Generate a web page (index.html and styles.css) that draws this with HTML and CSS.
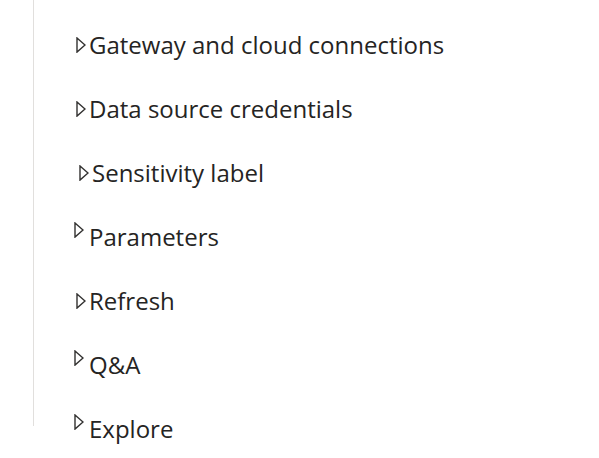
FILE: index.html
```html
<!DOCTYPE html>
<html>
<head>
<meta charset="utf-8">
<link rel="stylesheet" href="styles.css">
</head>
<body>
<div class="panel">
  <div class="rule"></div>
  <ul class="sections">
    <li class="section"><svg class="caret" viewBox="0 0 10 16" width="10" height="16"><polygon points="1,0.9 9,8 1,15.1"/></svg><span class="label">Gateway and cloud connections</span></li>
    <li class="section"><svg class="caret" viewBox="0 0 10 16" width="10" height="16"><polygon points="1,0.9 9,8 1,15.1"/></svg><span class="label">Data source credentials</span></li>
    <li class="section shifted"><svg class="caret" viewBox="0 0 10 16" width="10" height="16"><polygon points="1,0.9 9,8 1,15.1"/></svg><span class="label">Sensitivity label</span></li>
    <li class="section raised"><svg class="caret" viewBox="0 0 10 16" width="10" height="16"><polygon points="1,0.9 9,8 1,15.1"/></svg><span class="label">Parameters</span></li>
    <li class="section"><svg class="caret" viewBox="0 0 10 16" width="10" height="16"><polygon points="1,0.9 9,8 1,15.1"/></svg><span class="label">Refresh</span></li>
    <li class="section raised"><svg class="caret" viewBox="0 0 10 16" width="10" height="16"><polygon points="1,0.9 9,8 1,15.1"/></svg><span class="label">Q&amp;A</span></li>
    <li class="section raised"><svg class="caret" viewBox="0 0 10 16" width="10" height="16"><polygon points="1,0.9 9,8 1,15.1"/></svg><span class="label">Explore</span></li>
  </ul>
</div>
</body>
</html>
```
FILE: styles.css
```css
html, body {
  margin: 0;
  padding: 0;
  background: #ffffff;
}
body {
  font-family: "Open Sans", "Noto Sans", sans-serif;
  color: #252423;
}
.panel {
  display: flex;
  align-items: flex-start;
  margin-left: 33px;
}
.rule {
  flex: none;
  width: 1px;
  height: 426px;
  background: #e1dfdd;
}
.sections {
  list-style: none;
  margin: 0;
  padding: 13px 0 0 42px;
}
.section {
  display: flex;
  align-items: center;
  height: 64px;
}
.caret {
  flex: none;
  margin-right: 3px;
}
.caret polygon {
  fill: #ffffff;
  stroke: #323130;
  stroke-width: 1.4;
  stroke-linejoin: miter;
}
.label {
  font-size: 24px;
  line-height: 32px;
  white-space: nowrap;
}
.section.shifted .caret {
  margin-left: 3px;
}
.section.raised .caret {
  margin-left: -2px;
  margin-right: 5px;
  position: relative;
  top: -7px;
}
```
